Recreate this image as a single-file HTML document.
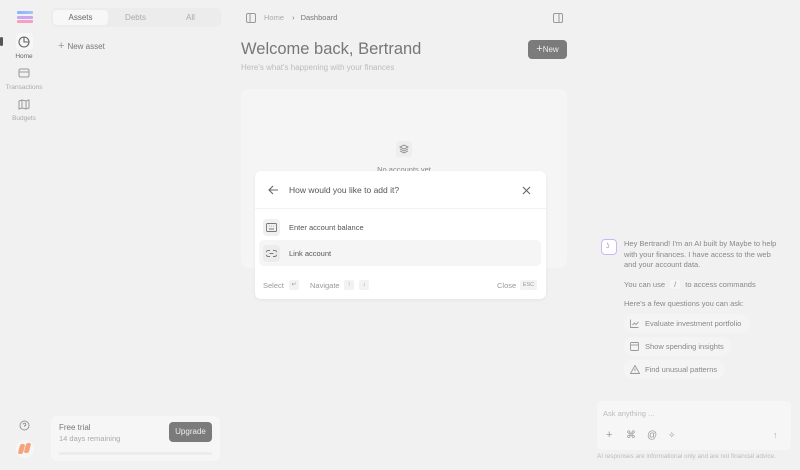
<!DOCTYPE html>
<html><head><meta charset="utf-8"><style>
*{box-sizing:border-box;margin:0;padding:0}
body{width:800px;height:470px;overflow:hidden;background:#f1f1f1;font-family:"Liberation Sans",sans-serif;position:relative;color:#555}
.abs{position:absolute}
svg{display:block}
</style></head><body>
<!-- logo -->
<div class="abs" style="left:17px;top:11px;width:16px;height:12px">
<div class="abs" style="left:0;top:0;width:16px;height:3px;background:linear-gradient(90deg,#8ab4f8,#a7c4fa);border-radius:1px"></div>
<div class="abs" style="left:0;top:5px;width:16px;height:3px;background:#c9a7f0;border-radius:1px"></div>
<div class="abs" style="left:0;top:9px;width:16px;height:3px;background:#f4a0c0;border-radius:1px"></div>
</div>
<div class="abs" style="left:0;top:37px;width:3px;height:9px;background:#555;border-radius:2px"></div>
<div class="abs" style="left:16px;top:33px;width:17px;height:17px;background:#f7f7f7;border-radius:4px"></div>
<svg class="abs" style="left:18px;top:36px" width="12" height="12" viewBox="0 0 12 12" fill="none" stroke="#666" stroke-width="1.1"><circle cx="6" cy="6" r="5"/><path d="M6 1v5h5"/></svg>
<div class="abs" style="left:0;width:48px;top:53px;text-align:center;font-size:6.5px;color:#666">Home</div>
<svg class="abs" style="left:18px;top:68px" width="12" height="10" viewBox="0 0 12 10" fill="none" stroke="#999" stroke-width="1"><rect x="1" y="1" width="10" height="8" rx="1.5"/><path d="M1 4h10"/></svg>
<div class="abs" style="left:0;width:48px;top:84px;text-align:center;font-size:6.5px;color:#aaa">Transactions</div>
<svg class="abs" style="left:18px;top:99px" width="12" height="11" viewBox="0 0 12 11" fill="none" stroke="#999" stroke-width="1"><path d="M1 2l3-1 4 1 3-1v8l-3 1-4-1-3 1z M4 1v8 M8 2v8"/></svg>
<div class="abs" style="left:0;width:48px;top:115px;text-align:center;font-size:6.5px;color:#aaa">Budgets</div>
<svg class="abs" style="left:19px;top:420px" width="11" height="11" viewBox="0 0 11 11" fill="none" stroke="#999" stroke-width="1"><circle cx="5.5" cy="5.5" r="4.5"/><path d="M4.2 4.3a1.3 1.3 0 1 1 1.3 1.5v.8M5.5 8v.1"/></svg>
<div class="abs" style="left:16px;top:440px;width:18px;height:18px;border-radius:9px;background:#f6f6f6"></div>
<div class="abs" style="left:19px;top:444px;width:5px;height:10px;background:#f4a37d;border-radius:2px;transform:skewX(-15deg)"></div>
<div class="abs" style="left:25px;top:443px;width:5px;height:10px;background:#f4a37d;border-radius:2px;transform:skewX(-15deg)"></div>

<!-- tabs -->
<div class="abs" style="left:51px;top:8px;width:170px;height:19px;background:#ececec;border-radius:5px"></div>
<div class="abs" style="left:53px;top:10px;width:55px;height:15px;background:#f7f7f7;border-radius:4px;font-size:8px;text-align:center;line-height:15px;color:#666">Assets</div>
<div class="abs" style="left:108px;top:10px;width:55px;line-height:15px;font-size:8px;text-align:center;color:#aaa">Debts</div>
<div class="abs" style="left:163px;top:10px;width:55px;line-height:15px;font-size:8px;text-align:center;color:#aaa">All</div>
<div class="abs" style="left:58px;top:40px;font-size:8px;color:#777"><span style="font-size:11px;color:#999;margin-right:3px">+</span>New asset</div>

<!-- trial -->
<div class="abs" style="left:51px;top:416px;width:169px;height:45px;background:#f6f6f6;border-radius:6px"></div>
<div class="abs" style="left:59px;top:423px;font-size:8px;color:#777">Free trial</div>
<div class="abs" style="left:59px;top:434px;font-size:7.5px;color:#aaa">14 days remaining</div>
<div class="abs" style="left:169px;top:422px;width:43px;height:20px;background:#7b7b7b;border-radius:4px;color:#eee;font-size:8px;text-align:center;line-height:20px">Upgrade</div>
<div class="abs" style="left:59px;top:452px;width:153px;height:3px;background:#ececec;border-radius:2px"></div>

<!-- header -->
<svg class="abs" style="left:246px;top:13px" width="10" height="10" viewBox="0 0 10 10" fill="none" stroke="#999" stroke-width="1"><rect x=".5" y=".5" width="9" height="9" rx="1.5"/><path d="M4 .5v9"/></svg>
<div class="abs" style="left:264px;top:13px;font-size:7.5px;color:#aaa">Home <span style="margin:0 6px;color:#777">›</span><span style="color:#777">Dashboard</span></div>
<svg class="abs" style="left:553px;top:13px" width="10" height="10" viewBox="0 0 10 10" fill="none" stroke="#999" stroke-width="1"><rect x=".5" y=".5" width="9" height="9" rx="1.5"/><path d="M6 .5v9"/></svg>
<div class="abs" style="left:241px;top:40px;font-size:16.5px;color:#777">Welcome back, Bertrand</div>
<div class="abs" style="left:241px;top:63px;font-size:8px;color:#bbb">Here's what's happening with your finances</div>
<div class="abs" style="left:528px;top:40px;width:39px;height:19px;background:#7b7b7b;border-radius:4px;color:#eee;font-size:8px;text-align:center;line-height:19px"><span style="font-size:11px">+</span>New</div>

<div class="abs" style="left:241px;top:89px;width:326px;height:179px;background:#f5f5f5;border-radius:7px"></div>
<div class="abs" style="left:396px;top:141px;width:16px;height:16px;background:#eeeeee;border-radius:3px"></div>
<svg class="abs" style="left:399px;top:144px" width="10" height="10" viewBox="0 0 10 10" fill="none" stroke="#888" stroke-width=".9"><path d="M5 1l4 2-4 2-4-2z M1 5l4 2 4-2 M1 7l4 2 4-2"/></svg>
<div class="abs" style="left:241px;width:326px;top:165px;text-align:center;font-size:7.5px;color:#888">No accounts yet</div>

<!-- modal -->
<div class="abs" style="left:255px;top:171px;width:291px;height:128px;background:#fff;border-radius:6px;box-shadow:0 1px 3px rgba(0,0,0,.06)"></div>
<svg class="abs" style="left:268px;top:185px" width="11" height="10" viewBox="0 0 11 10" fill="none" stroke="#666" stroke-width="1.1"><path d="M10 5H1M5 1L1 5l4 4"/></svg>
<div class="abs" style="left:289px;top:185px;font-size:8.5px;color:#555">How would you like to add it?</div>
<svg class="abs" style="left:522px;top:186px" width="9" height="9" viewBox="0 0 9 9" fill="none" stroke="#666" stroke-width="1.1"><path d="M1 1l7 7M8 1L1 8"/></svg>
<div class="abs" style="left:255px;top:208px;width:291px;height:1px;background:#f2f2f2"></div>
<div class="abs" style="left:263px;top:219px;width:17px;height:17px;background:#f0f0f0;border-radius:4px"></div>
<svg class="abs" style="left:266px;top:223px" width="11" height="9" viewBox="0 0 11 9" fill="none" stroke="#777" stroke-width=".9"><rect x=".5" y=".5" width="10" height="8" rx="1"/><path d="M3 6h5M3 3h.5M5 3h.5M7 3h.5"/></svg>
<div class="abs" style="left:289px;top:223px;font-size:7.5px;color:#555">Enter account balance</div>
<div class="abs" style="left:259px;top:240px;width:282px;height:26px;background:#f5f5f5;border-radius:5px"></div>
<div class="abs" style="left:263px;top:245px;width:17px;height:17px;background:#ececec;border-radius:4px"></div>
<svg class="abs" style="left:266px;top:250px" width="11" height="7" viewBox="0 0 11 7" fill="none" stroke="#777" stroke-width=".9"><path d="M4 .5H2.5a3 3 0 0 0 0 6H4M7 .5h1.5a3 3 0 0 1 0 6H7M3.5 3.5h4"/></svg>
<div class="abs" style="left:289px;top:249px;font-size:7.5px;color:#555">Link account</div>
<div class="abs" style="left:263px;top:281px;font-size:7.5px;color:#999">Select</div>
<div class="abs" style="left:289px;top:280px;width:10px;height:10px;background:#f2f2f2;border-radius:2px;font-size:6px;text-align:center;line-height:10px;color:#999">↵</div>
<div class="abs" style="left:310px;top:281px;font-size:7.5px;color:#999">Navigate</div>
<div class="abs" style="left:344px;top:280px;width:10px;height:10px;background:#f2f2f2;border-radius:2px;font-size:6px;text-align:center;line-height:10px;color:#999">↑</div>
<div class="abs" style="left:359px;top:280px;width:10px;height:10px;background:#f2f2f2;border-radius:2px;font-size:6px;text-align:center;line-height:10px;color:#999">↓</div>
<div class="abs" style="left:497px;top:281px;font-size:7.5px;color:#999">Close</div>
<div class="abs" style="left:520px;top:280px;width:17px;height:10px;background:#f2f2f2;border-radius:2px;font-size:5.5px;text-align:center;line-height:10px;color:#999">ESC</div>

<!-- AI panel -->
<div class="abs" style="left:601px;top:239px;width:16px;height:16px;border-radius:4px;background:#fff;border:1px solid #c9b8f2"></div>
<div class="abs" style="left:606px;top:243px;font-size:7px;color:#b08ae0">ʖ</div>
<div class="abs" style="left:624px;top:239px;width:160px;font-size:7.5px;line-height:10.5px;color:#888">Hey Bertrand! I'm an AI built by Maybe to help with your finances. I have access to the web and your account data.</div>
<div class="abs" style="left:624px;top:280px;font-size:7.5px;color:#888">You can use <span style="display:inline-block;background:#f6f6f6;padding:0 4px;margin:0 3px">/</span> to access commands</div>
<div class="abs" style="left:624px;top:299px;font-size:7.5px;color:#888">Here's a few questions you can ask:</div>
<div class="abs" style="left:624px;top:314px;width:126px;height:19px;border-radius:10px;background:#f4f4f4;font-size:7.5px;color:#888;line-height:19px;padding-left:21px">Evaluate investment portfolio</div>
<div class="abs" style="left:624px;top:337px;width:107px;height:19px;border-radius:10px;background:#f4f4f4;font-size:7.5px;color:#888;line-height:19px;padding-left:21px">Show spending insights</div>
<div class="abs" style="left:624px;top:360px;width:101px;height:19px;border-radius:10px;background:#f4f4f4;font-size:7.5px;color:#888;line-height:19px;padding-left:21px">Find unusual patterns</div>
<svg class="abs" style="left:630px;top:319px" width="9" height="9" viewBox="0 0 9 9" fill="none" stroke="#999" stroke-width=".9"><path d="M.5 .5v8h8M2.5 6l2-2 1.5 1.5L8.5 3"/></svg>
<svg class="abs" style="left:630px;top:342px" width="9" height="9" viewBox="0 0 9 9" fill="none" stroke="#999" stroke-width=".9"><rect x=".5" y=".5" width="8" height="8" rx="1"/><path d="M.5 3h8"/></svg>
<svg class="abs" style="left:630px;top:365px" width="10" height="9" viewBox="0 0 10 9" fill="none" stroke="#999" stroke-width=".9"><path d="M5 .5l4.5 8h-9z M5 3.5v2.5M5 7v.2"/></svg>
<div class="abs" style="left:597px;top:401px;width:194px;height:49px;background:#f6f6f6;border-radius:5px"></div>
<div class="abs" style="left:603px;top:409px;font-size:7.5px;color:#bbb">Ask anything ...</div>
<div class="abs" style="left:606px;top:429px;font-size:11px;color:#999">+</div>
<div class="abs" style="left:626px;top:430px;font-size:10px;color:#999">⌘</div>
<div class="abs" style="left:647px;top:430px;font-size:10px;color:#999">@</div>
<div class="abs" style="left:668px;top:430px;font-size:9px;color:#999">✧</div>
<div class="abs" style="left:773px;top:430px;font-size:9px;color:#aaa">↑</div>
<div class="abs" style="left:597px;top:453px;font-size:6.3px;color:#bbb">AI responses are informational only and are not financial advice.</div>
</body></html>
